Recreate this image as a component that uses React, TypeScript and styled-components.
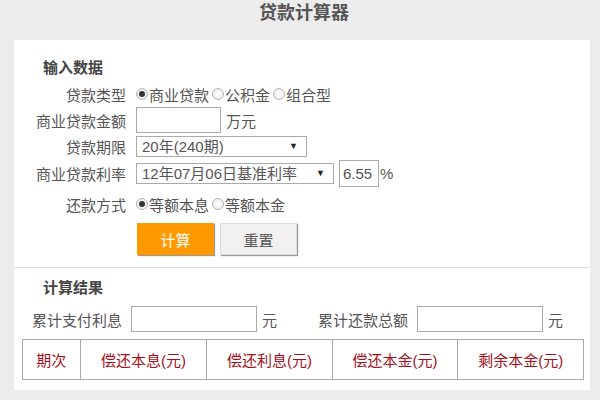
import * as React from 'react';
import styled, { createGlobalStyle } from 'styled-components';

const GlobalStyle = createGlobalStyle`
  html, body {
    margin: 0;
    padding: 0;
    background-color: #ececec;
    font-family: "Liberation Sans", "Noto Sans CJK SC", sans-serif;
    color: #555;
  }
`;

const Page = styled.div`
  width: 600px;
  height: 400px;
  overflow: hidden;
`;

const Title = styled.h1`
  margin: 0;
  height: 40px;
  line-height: 26px;
  padding-left: 8px;
  text-align: center;
  font-size: 18px;
  font-weight: bold;
  color: #555;
`;

const Panel = styled.div`
  margin: 0 10px 0 14px;
  background-color: #fff;
`;

const Section = styled.section<{ $divider?: boolean }>`
  padding: ${(p) => (p.$divider ? '18px 0 12px' : '10px 0 10px')};
  border-bottom: ${(p) => (p.$divider ? '1px solid #ddd' : 'none')};
`;

const Heading = styled.h3`
  margin: 0 0 3px 29px;
  height: 20px;
  line-height: 20px;
  font-size: 15px;
  font-weight: bold;
  color: #444;
`;

const FormRow = styled.div<{ $gap?: number }>`
  display: flex;
  align-items: center;
  height: 26px;
  margin-top: ${(p) => p.$gap ?? 0}px;
  font-size: 15px;
`;

const Label = styled.label`
  width: 112px;
  margin-right: 10px;
  text-align: right;
  white-space: nowrap;
  color: #555;
`;

const RadioItem = styled.label`
  display: inline-flex;
  align-items: center;
  margin-right: 3px;
  color: #555;
`;

const Radio = styled.input.attrs({ type: 'radio' })`
  appearance: none;
  width: 12px;
  height: 12px;
  margin: 0 1px 0 0;
  border: 1px solid #b5b5b5;
  border-radius: 50%;
  background: radial-gradient(circle, #fff 0%, #e6e6e6 100%);
  position: relative;

  &:checked::after {
    content: '';
    position: absolute;
    left: 2px;
    top: 2px;
    width: 6px;
    height: 6px;
    border-radius: 50%;
    background-color: #333;
  }
`;

const TextInput = styled.input<{ $w: number; $h?: number }>`
  box-sizing: border-box;
  width: ${(p) => p.$w}px;
  height: ${(p) => p.$h ?? 26}px;
  border: 1px solid #aaa;
  padding: 0 3px;
  font-size: 15px;
  font-family: inherit;
  color: #555;
  outline: none;
`;

const Unit = styled.span`
  margin-left: 5px;
  color: #555;
`;

const SelectWrap = styled.div<{ $w: number }>`
  position: relative;
  width: ${(p) => p.$w}px;
  height: 21px;
  box-sizing: border-box;
  border: 1px solid #aaa;
  font-size: 15px;
  line-height: 19px;
  padding-left: 5px;
  color: #555;
`;

const Arrow = styled.span`
  position: absolute;
  right: 8px;
  top: 0;
  font-size: 9px;
  color: #222;
`;

const ButtonRow = styled.div`
  display: flex;
  gap: 6px;
  margin: 6px 0 0 123px;
`;

const Button = styled.button<{ $primary?: boolean }>`
  width: 77px;
  height: 32px;
  border: 1px solid ${(p) => (p.$primary ? '#f90' : '#ddd')};
  background-color: ${(p) => (p.$primary ? '#ff9900' : '#f1f1f1')};
  color: ${(p) => (p.$primary ? '#fff' : '#555')};
  font-size: 15px;
  font-family: inherit;
  box-shadow: 1px 1px 1px #999;
  cursor: pointer;
`;

const ResultRow = styled.div`
  display: flex;
  align-items: center;
  height: 26px;
  margin: 8px 0 0 18px;
  font-size: 15px;
`;

const ResultLabel = styled.span<{ $ml?: number }>`
  margin-left: ${(p) => p.$ml ?? 0}px;
  margin-right: 9px;
  color: #555;
`;

const Table = styled.table`
  margin: 7px 0 0 8px;
  width: 562px;
  border-collapse: collapse;
  font-size: 15px;
`;

const Th = styled.th<{ $w: number }>`
  width: ${(p) => p.$w}px;
  height: 37px;
  border: 1px solid #aaa;
  color: #a3121c;
  font-weight: normal;
  text-align: center;
`;

const columns: [string, number][] = [
  ['期次', 56],
  ['偿还本息(元)', 127],
  ['偿还利息(元)', 126],
  ['偿还本金(元)', 126],
  ['剩余本金(元)', 126],
];

const App: React.FC = () => (
  <Page>
    <GlobalStyle />
    <Title>贷款计算器</Title>
    <Panel>
      <Section $divider>
        <Heading>输入数据</Heading>
        <FormRow>
          <Label>贷款类型</Label>
          <RadioItem><Radio name="type" defaultChecked />商业贷款</RadioItem>
          <RadioItem><Radio name="type" />公积金</RadioItem>
          <RadioItem><Radio name="type" />组合型</RadioItem>
        </FormRow>
        <FormRow>
          <Label>商业贷款金额</Label>
          <TextInput $w={85} />
          <Unit>万元</Unit>
        </FormRow>
        <FormRow>
          <Label>贷款期限</Label>
          <SelectWrap $w={171}>
            20年(240期)
            <Arrow>▼</Arrow>
          </SelectWrap>
        </FormRow>
        <FormRow $gap={1}>
          <Label>商业贷款利率</Label>
          <SelectWrap $w={198}>
            12年07月06日基准利率
            <Arrow>▼</Arrow>
          </SelectWrap>
          <TextInput $w={40} $h={27} defaultValue="6.55" style={{ marginLeft: 5 }} />
          <Unit style={{ marginLeft: 1 }}>%</Unit>
        </FormRow>
        <FormRow $gap={5}>
          <Label>还款方式</Label>
          <RadioItem><Radio name="way" defaultChecked />等额本息</RadioItem>
          <RadioItem><Radio name="way" />等额本金</RadioItem>
        </FormRow>
        <ButtonRow>
          <Button $primary>计算</Button>
          <Button>重置</Button>
        </ButtonRow>
      </Section>
      <Section>
        <Heading>计算结果</Heading>
        <ResultRow>
          <ResultLabel>累计支付利息</ResultLabel>
          <TextInput $w={126} />
          <Unit>元</Unit>
          <ResultLabel $ml={41}>累计还款总额</ResultLabel>
          <TextInput $w={126} />
          <Unit>元</Unit>
        </ResultRow>
        <Table>
          <thead>
            <tr>
              {columns.map(([name, w]) => (
                <Th key={name} $w={w}>{name}</Th>
              ))}
            </tr>
          </thead>
        </Table>
      </Section>
    </Panel>
  </Page>
);

export default App;
